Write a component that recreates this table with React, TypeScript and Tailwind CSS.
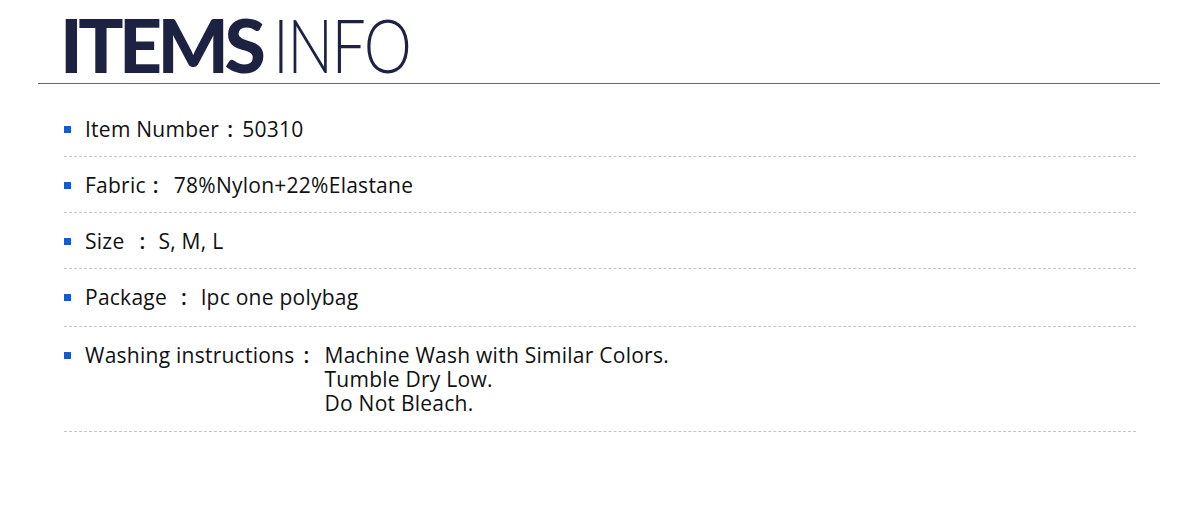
import React from "react";

// Product detail "ITEMS INFO" block: heading + dashed-rule spec list.
const rows: { label: string; colon: string; pad: string; value: string[] }[] = [
  { label: "Item Number", colon: "ml-[8px] mr-[9px]", pad: "pb-[15px]", value: ["50310"] },
  { label: "Fabric", colon: "ml-[7px] mr-[15px]", pad: "pb-[15px]", value: ["78%Nylon+22%Elastane"] },
  { label: "Size", colon: "ml-[15px] mr-[13px]", pad: "pb-[15px]", value: ["S, M, L"] },
  { label: "Package", colon: "ml-[14px] mr-[14px]", pad: "pb-[17px]", value: ["lpc one polybag"] },
  {
    label: "Washing instructions",
    colon: "ml-[9px] mr-[15px]",
    pad: "pb-[16px]",
    value: ["Machine Wash with Similar Colors.", "Tumble Dry Low.", "Do Not Bleach."],
  },
];

export default function App() {
  return (
    <main className="h-[515px] w-[1200px] bg-white font-['Open_Sans',sans-serif] text-[#111]">
      <header className="px-[38px] pt-[7px]">
        <h1 className="flex items-baseline pl-[22px] font-['Lato',sans-serif] text-[75px] leading-[75px] text-[#1d2142]">
          <span className="font-black tracking-[-4.5px]">ITEMS</span>
          <span className="ml-[12px] origin-left scale-x-[0.81] font-light tracking-[-2px]">INFO</span>
        </h1>
        <div className="mr-[2px] mt-[1px] h-px bg-[#666]" />
      </header>

      <ul className="mx-[64px] mt-[17px]">
        {rows.map((row) => (
          <li
            key={row.label}
            className={`flex border-b border-dashed border-[#c4c4c4] pt-[16px] text-[21px] leading-[24px] tracking-[0.25px] ${row.pad}`}
          >
            <span className="mr-[14px] mt-[9px] h-[7px] w-[7px] shrink-0 bg-[#1559d4]" />
            <span>{row.label}</span>
            <span className={`font-semibold ${row.colon}`}>:</span>
            <span className="flex flex-col">
              {row.value.map((v) => (
                <span key={v}>{v}</span>
              ))}
            </span>
          </li>
        ))}
      </ul>
    </main>
  );
}
